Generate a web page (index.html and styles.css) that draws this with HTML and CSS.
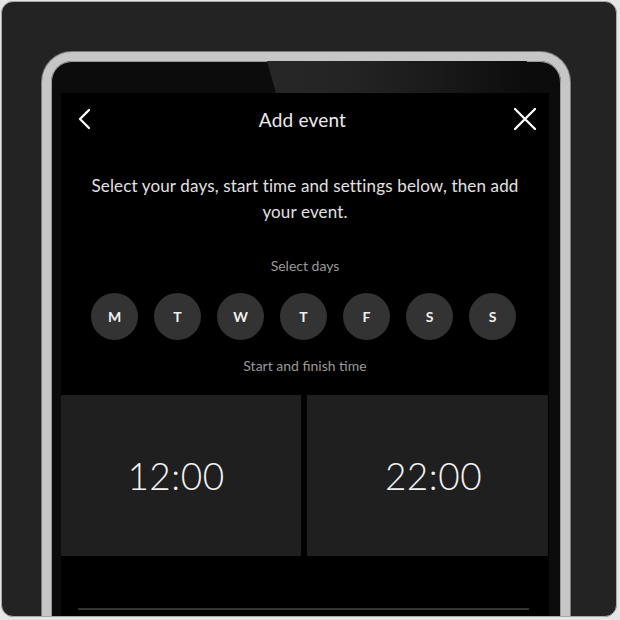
FILE: index.html
```html
<!DOCTYPE html>
<html>
<head>
<meta charset="utf-8">
<link rel="stylesheet" href="styles.css">
</head>
<body>
<div class="frame">
  <div class="phone">
    <div class="gloss"></div>
    <div class="screen">
      <div class="header">
        <svg class="icon back" width="14" height="22" viewBox="0 0 14 22"><polyline points="11,2 2,11 11,20" fill="none" stroke="#fff" stroke-width="2.3" stroke-linecap="round" stroke-linejoin="round"/></svg>
        <div class="title">Add event</div>
        <svg class="icon close" width="24" height="24" viewBox="0 0 24 24"><path d="M2 2 L22 22 M22 2 L2 22" fill="none" stroke="#fff" stroke-width="2.3" stroke-linecap="round"/></svg>
      </div>
      <p class="desc">Select your days, start time and settings below, then add your event.</p>
      <div class="label">Select days</div>
      <div class="days">
        <span class="day">M</span><span class="day">T</span><span class="day">W</span><span class="day">T</span><span class="day">F</span><span class="day">S</span><span class="day">S</span>
      </div>
      <div class="label label2">Start and finish time</div>
      <div class="times">
        <div class="time start">12:00</div>
        <div class="time finish">22:00</div>
      </div>
      <div class="bottom">
        <div class="rule"></div>
      </div>
    </div>
  </div>
</div>
</body>
</html>
```

FILE: styles.css
```css
html, body {
  margin: 0;
  padding: 0;
  background: #e6e6e6;
  width: 620px;
  height: 620px;
  overflow: hidden;
}
.frame {
  position: relative;
  margin: 1px;
  width: 616px;
  height: 616px;
  border: 1px solid #a8a8a8;
  border-radius: 12px;
  background: #232323;
  overflow: hidden;
  padding-top: 50px;
  box-sizing: border-box;
  font-family: "Lato", "Noto Sans", sans-serif;
}
.phone {
  position: relative;
  margin-left: 40px;
  width: 528px;
  height: 620px;
  box-sizing: border-box;
  border: 9px solid #c6c6c6;
  border-bottom: none;
  border-radius: 30px 30px 0 0;
  background: #0c0c0c;
  padding: 32px 12px 0 10px;
  box-shadow: inset 0 0 0 1px #9a9a9a, 0 0 0 1px #7a7a7a;
}
.gloss {
  position: absolute;
  top: 0;
  left: 216px;
  width: 260px;
  height: 32px;
  background: linear-gradient(90deg, #272727 0%, #242424 30%, #1a1a1a 65%, #0c0c0c 100%);
  clip-path: polygon(0 0, 100% 0, 100% 100%, 9px 100%);
}
.screen {
  position: relative;
  background: #000;
  height: 600px;
  color: #fff;
}
.header {
  height: 52px;
  display: flex;
  align-items: center;
  justify-content: space-between;
  padding: 0 12px 0 17px;
}
.title {
  font-size: 19px;
  color: #ececec;
  letter-spacing: 0.2px;
}
.icon {
  display: block;
}
.desc {
  margin: 28px 20px 0;
  font-size: 17px;
  line-height: 26px;
  text-align: center;
  color: #e2e2e2;
  padding: 0 10px;
  letter-spacing: 0.15px;
}
.label {
  margin-top: 31px;
  font-size: 14px;
  line-height: 20px;
  text-align: center;
  color: #9a9a9a;
}
.days {
  margin-top: 17px;
  display: flex;
  justify-content: center;
  gap: 16px;
  padding-right: 3px;
}
.day {
  width: 47px;
  height: 47px;
  border-radius: 50%;
  background: #333333;
  display: flex;
  align-items: center;
  justify-content: center;
  font-size: 14px;
  font-weight: 700;
  color: #f0f0f0;
}
.label2 {
  margin-top: 16px;
}
.times {
  margin-top: 19px;
  display: grid;
  grid-template-columns: 240px 241px;
  gap: 6px;
  height: 161px;
}
.time {
  background: #1f1f1f;
  display: flex;
  align-items: center;
  justify-content: center;
  font-size: 37px;
  font-weight: 300;
  color: #f2f2f2;
  letter-spacing: 0.5px;
}
.time.start {
  padding-right: 10px;
}
.time.finish {
  padding-left: 12px;
}
.bottom {
  padding: 52px 20px 0 17px;
}
.rule {
  height: 2px;
  background: #333;
}
```
